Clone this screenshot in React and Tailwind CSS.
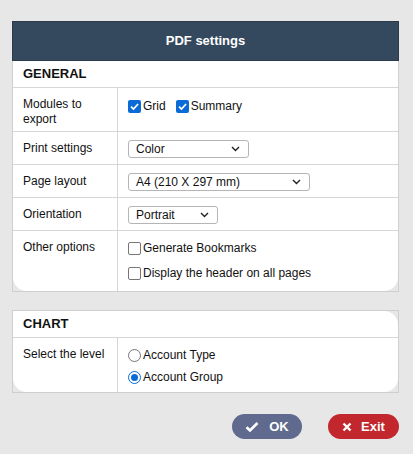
import React from "react";

const Check = ({ checked }) =>
  checked ? (
    <span className="w-[13px] h-[13px] rounded-[2px] bg-[#0b6bd6] flex items-center justify-center shrink-0">
      <svg width="11" height="11" viewBox="0 0 12 12">
        <path d="M2.2 6.2 L4.9 8.8 L9.9 3.3" fill="none" stroke="#fff" strokeWidth="1.9" />
      </svg>
    </span>
  ) : (
    <span className="w-[13px] h-[13px] rounded-[2px] border border-[#767676] bg-white shrink-0" />
  );

const Radio = ({ checked }) => (
  <span
    className={
      "w-[13px] h-[13px] rounded-full border bg-white flex items-center justify-center shrink-0 " +
      (checked ? "border-[#0b6bd6]" : "border-[#767676]")
    }
  >
    {checked && <span className="w-[7px] h-[7px] rounded-full bg-[#0b6bd6]" />}
  </span>
);

const Select = ({ value, width }) => (
  <div
    className="h-[18px] border border-[#b5b5b5] rounded-[3px] bg-white flex items-center justify-between pl-[7px] pr-[8px]"
    style={{ width }}
  >
    <span>{value}</span>
    <svg width="9" height="6" viewBox="0 0 9 6">
      <path d="M1 1 L4.5 4.5 L8 1" fill="none" stroke="#222" strokeWidth="1.4" />
    </svg>
  </div>
);

const Row = ({ label, children, last, h }) => (
  <div className={"flex " + (last ? "" : "border-b border-[#d6d6d6]")} style={{ minHeight: h }}>
    <div className="w-[105px] shrink-0 border-r border-[#d6d6d6] pl-[10px] pr-2 pt-[9px] leading-[15px]">
      {label}
    </div>
    <div className="flex-1 pl-[10px] pt-[8px]">{children}</div>
  </div>
);

export default function App() {
  return (
    <div
      className="w-[413px] h-[454px] bg-[#e7e7e7] pt-[21px] pl-[12px] pr-[14px] text-[12px] text-[#111]"
      style={{ fontFamily: "'Liberation Sans', Arial, sans-serif" }}
    >
      <div className="border border-[#cfcfcf]">
        <div className="h-[40px] bg-[#34495e] border border-[#2b3b4c] -m-px mb-0 flex items-center justify-center text-white font-bold text-[13px]">
          PDF settings
        </div>
        <div className="bg-white rounded-b-[14px]">
          <div className="h-[27px] border-b border-[#d6d6d6] pl-[10px] flex items-center font-bold text-[13px]">
            GENERAL
          </div>
          <Row label="Modules to export" h={44}>
            <div className="flex items-center gap-[10px] pt-[1px]">
              <label className="flex items-center gap-[2px]">
                <Check checked /> Grid
              </label>
              <label className="flex items-center gap-[2px]">
                <Check checked /> Summary
              </label>
            </div>
          </Row>
          <Row label="Print settings" h={33}>
            <Select value="Color" width={121} />
          </Row>
          <Row label="Page layout" h={33}>
            <Select value="A4 (210 X 297 mm)" width={182} />
          </Row>
          <Row label="Orientation" h={33}>
            <Select value="Portrait" width={90} />
          </Row>
          <Row label="Other options" h={60} last>
            <div className="flex flex-col gap-[7px]">
              <label className="flex items-center gap-[2px]">
                <Check /> Generate Bookmarks
              </label>
              <label className="flex items-center gap-[2px]">
                <Check /> Display the header on all pages
              </label>
            </div>
          </Row>
        </div>
      </div>

      <div className="border border-[#cfcfcf] mt-[18px]">
        <div className="bg-white rounded-tr-[14px] rounded-b-[14px]">
          <div className="h-[27px] border-b border-[#d6d6d6] pl-[10px] flex items-center font-bold text-[13px]">
            CHART
          </div>
          <Row label="Select the level" h={54} last>
            <div className="flex flex-col gap-[4px]">
              <label className="flex items-center gap-[2px]">
                <Radio /> Account Type
              </label>
              <label className="flex items-center gap-[2px]">
                <Radio checked /> Account Group
              </label>
            </div>
          </Row>
        </div>
      </div>

      <div className="flex justify-end gap-[26px] mt-[21px]">
        <button className="w-[70px] h-[25px] rounded-full bg-[#5f6a8e] text-white font-bold text-[13px] flex items-center justify-center gap-[10px]">
          <svg width="14" height="12" viewBox="0 0 14 12">
            <path d="M1.5 6.2 L5 9.5 L12.5 2" fill="none" stroke="#fff" strokeWidth="2.6" />
          </svg>
          OK
        </button>
        <button className="w-[71px] h-[25px] rounded-full bg-[#c1272d] text-white font-bold text-[13px] flex items-center justify-center gap-[9px]">
          <svg width="10" height="10" viewBox="0 0 10 10">
            <path d="M1.5 1.5 L8.5 8.5 M8.5 1.5 L1.5 8.5" fill="none" stroke="#fff" strokeWidth="2.4" />
          </svg>
          Exit
        </button>
      </div>
    </div>
  );
}
